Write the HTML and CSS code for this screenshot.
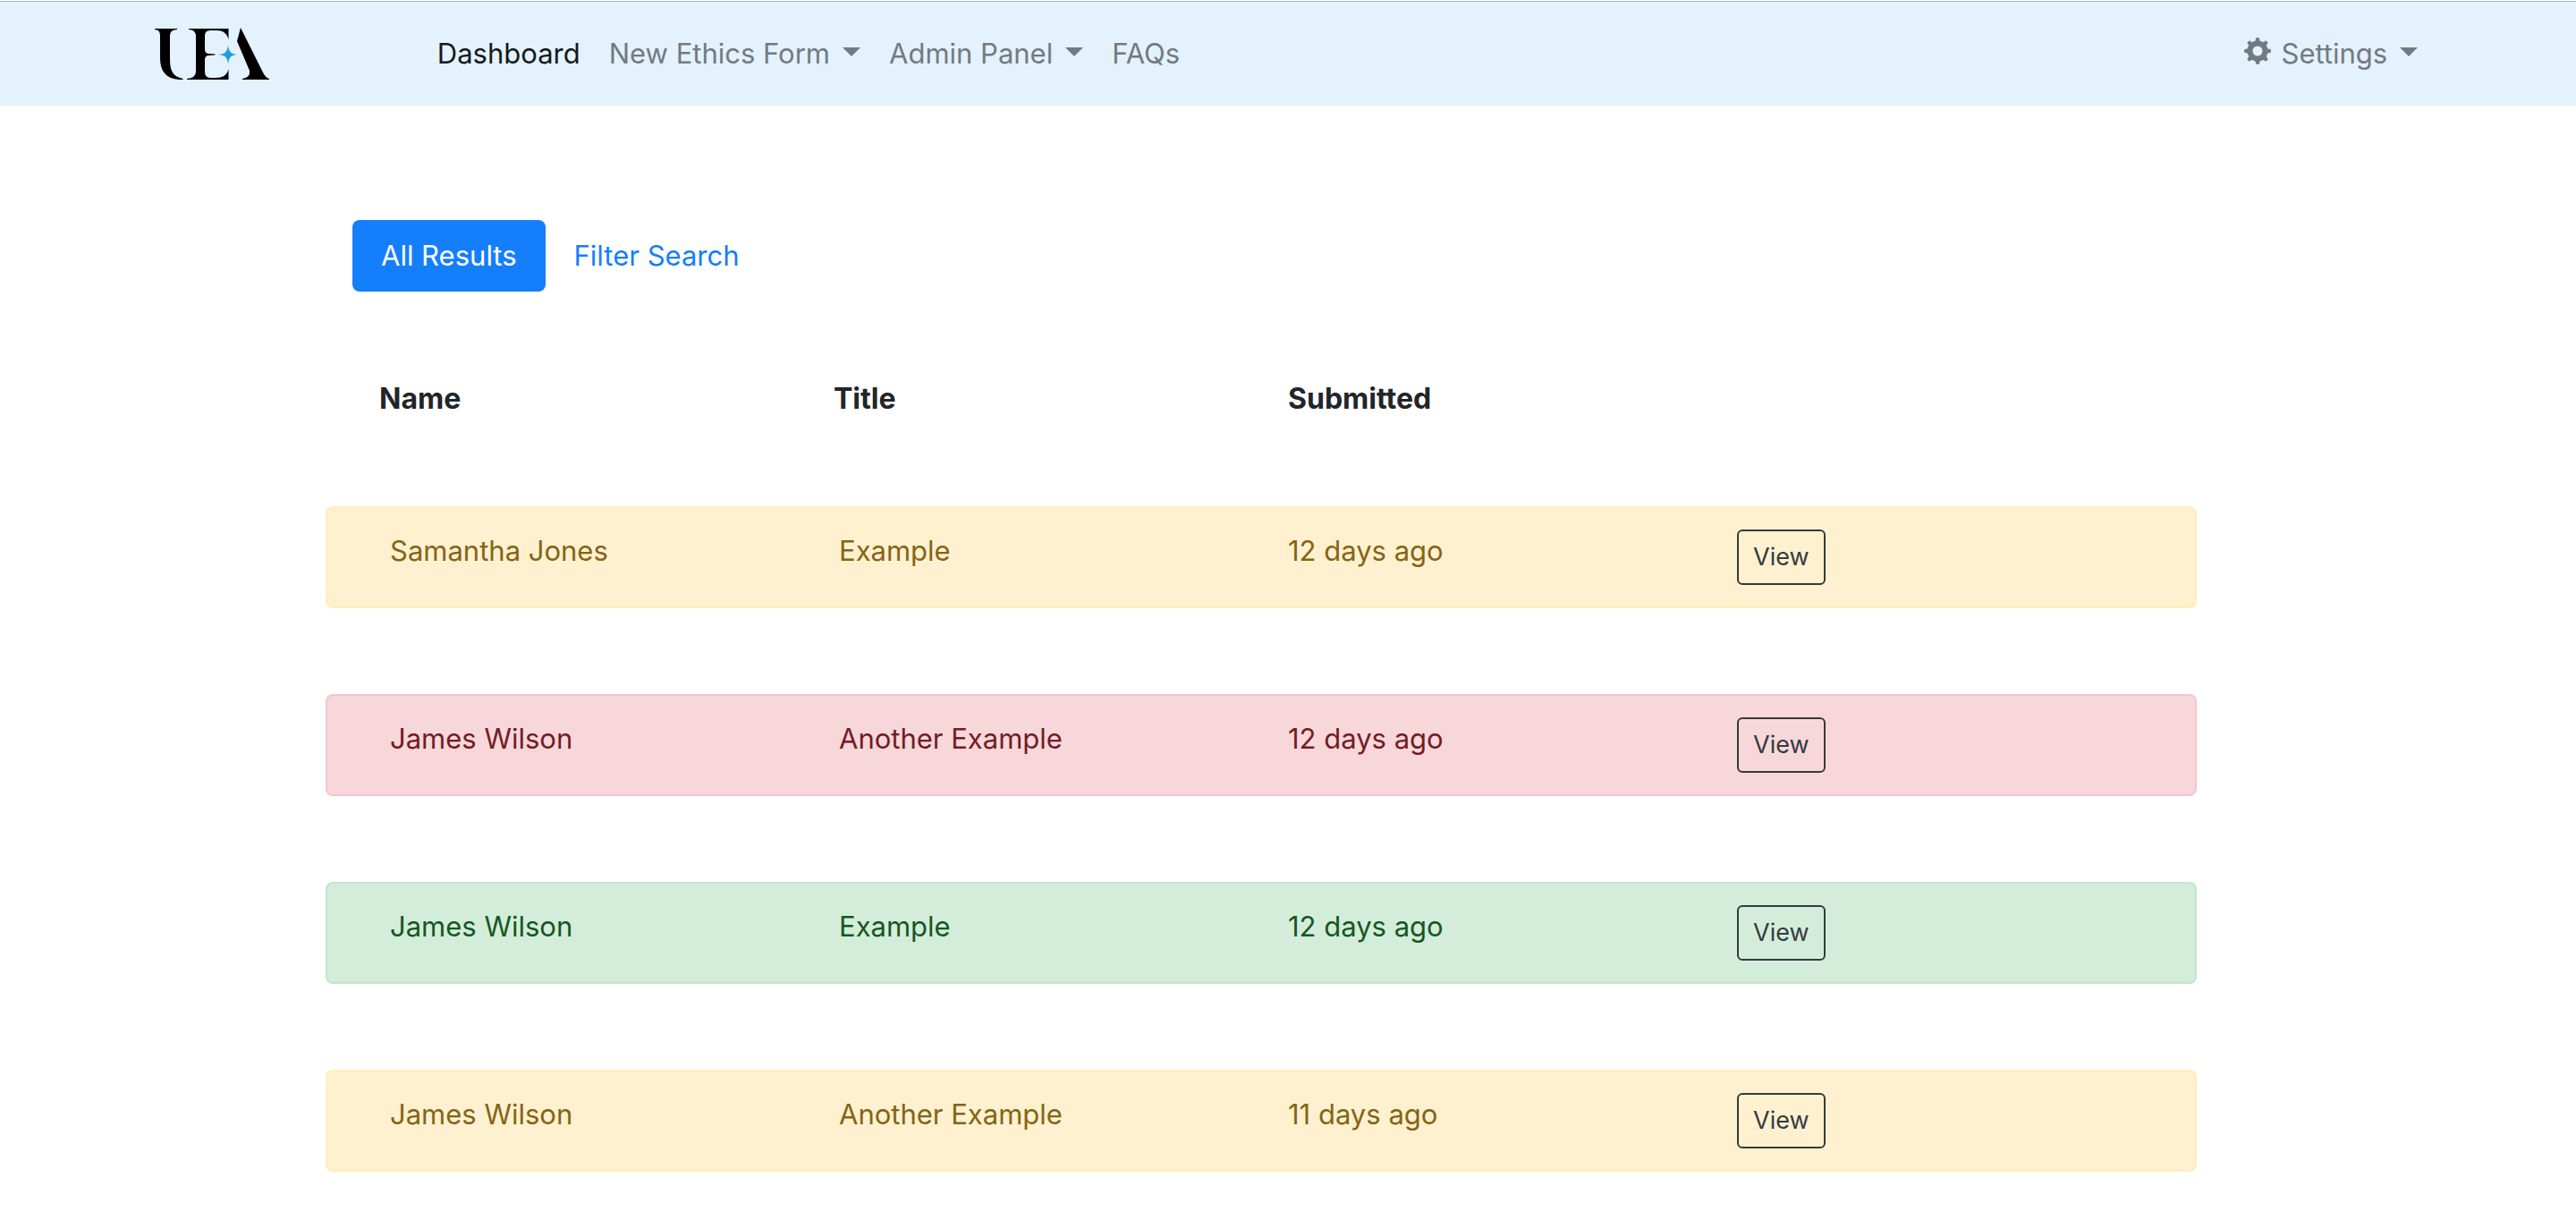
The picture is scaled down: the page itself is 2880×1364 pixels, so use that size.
FILE: index.html
```html
<!DOCTYPE html>
<html lang="en">
<head>
<meta charset="utf-8">
<meta name="viewport" content="width=device-width, initial-scale=1">
<title>Dashboard</title>
<link rel="stylesheet" href="styles.css">
</head>
<body>
<header class="navbar">
  <a class="brand" href="#" aria-label="UEA home">
    <svg class="logo" viewBox="0 0 128 58" aria-hidden="true">
      <g fill="#000">
        <path d="M0 1H25V2Q17 2 17 9V36C17 50 22 55 31.500 57V58H27C13 57 6 49 6 34V9Q6 2 0 2Z"/>
        <path d="M38 1H82.500V13.500C81 6 76 3 69 3H62Q56 3 56 9V24Q56 28.500 60 29L67.500 29.500V30.500L60 31Q56 31.500 56 36V49Q56 56 62 56H68C76 56 81 53 82.500 46V58H36V57Q46 56 46 49V10Q46 2 38 2Z"/>
        <path d="M96 0L121 50Q124 56 128 57V58H98V57Q107 56 106 48L92 15Z"/>
      </g>
      <path fill="#1b9fdf" d="M82 19Q82.500 25 85 27.500Q87 29.500 93 30Q87 30.500 85 32.500Q82.500 35 82 41Q81.500 35 79 32.500Q77 30.500 70 30Q77 29.500 79 27.500Q81.500 25 82 19Z"/>
    </svg>
  </a>
  <nav class="menu">
    <a class="menu-link current" href="#" aria-current="page">Dashboard</a>
    <button class="menu-link caret" type="button">New Ethics Form</button>
    <button class="menu-link caret" type="button">Admin Panel</button>
    <a class="menu-link" href="#">FAQs</a>
  </nav>
  <button class="menu-link caret settings" type="button">
    <svg class="gear" viewBox="0 0 30 30" aria-hidden="true">
      <path fill="none" stroke="currentColor" stroke-width="6" d="M15 6.500a8.500 8.500 0 1 0 0 17a8.500 8.500 0 1 0 0-17Z"/>
      <g fill="currentColor">
        <path id="tooth" d="M12 6L13 1Q13 0 15 0Q17 0 17 1L18 6Z"/>
        <use href="#tooth" transform="rotate(45 15 15)"/>
        <use href="#tooth" transform="rotate(90 15 15)"/>
        <use href="#tooth" transform="rotate(135 15 15)"/>
        <use href="#tooth" transform="rotate(180 15 15)"/>
        <use href="#tooth" transform="rotate(225 15 15)"/>
        <use href="#tooth" transform="rotate(270 15 15)"/>
        <use href="#tooth" transform="rotate(315 15 15)"/>
      </g>
    </svg>Settings</button>
</header>
<main class="content">
  <div class="pills">
    <button class="pill active" type="button">All Results</button>
    <button class="pill" type="button">Filter Search</button>
  </div>
  <table class="results">
    <thead>
      <tr class="head"><th scope="col">Name</th><th scope="col">Title</th><th scope="col">Submitted</th><td></td></tr>
    </thead>
    <tbody>
      <tr class="entry warning"><td>Samantha Jones</td><td>Example</td><td>12 days ago</td><td><button class="view" type="button">View</button></td></tr>
      <tr class="entry danger"><td>James Wilson</td><td>Another Example</td><td>12 days ago</td><td><button class="view" type="button">View</button></td></tr>
      <tr class="entry success"><td>James Wilson</td><td>Example</td><td>12 days ago</td><td><button class="view" type="button">View</button></td></tr>
      <tr class="entry warning"><td>James Wilson</td><td>Another Example</td><td>11 days ago</td><td><button class="view" type="button">View</button></td></tr>
    </tbody>
  </table>
</main>
</body>
</html>
```
FILE: styles.css
```css
* {
  box-sizing: border-box;
}

body {
  margin: 0;
  padding-top: 1px;
  background: #fff;
  color: #212529;
  font: 31px/48px Inter, "Liberation Sans", sans-serif;
}

button {
  font: inherit;
  border: 0;
  background: none;
  cursor: pointer;
}

a {
  text-decoration: none;
}

.navbar {
  display: flex;
  align-items: center;
  padding: 18px 6%;
  border-top: 1px solid #adb4b9;
  background: #e3f2fd;
}

.brand {
  display: flex;
  width: 300px;
}

.logo {
  width: 128px;
  height: 58px;
}

.menu {
  display: flex;
}

.menu-link {
  display: flex;
  align-items: center;
  padding: 16px;
  color: #737a80;
}

.current {
  color: #17191b;
}

.caret::after {
  content: "";
  margin: 0 0 4px 14px;
  border: solid transparent;
  border-width: 10px 10px 0;
  border-top-color: currentColor;
}

.settings {
  margin-left: auto;
  padding-right: 4px;
}

.gear {
  width: 30px;
  height: 30px;
  margin: 0 12px 6px 0;
}

.content {
  max-width: 2280px;
  margin: 0 auto;
  padding: 128px 124px 0 64px;
}

.pills {
  display: flex;
  padding: 0 30px;
}

.pill {
  padding: 16px 32px;
  border-radius: 8px;
  color: #157efb;
}

.active {
  background: #157efb;
  color: #fff;
}

.results {
  display: block;
  margin-top: 96px;
}

.results thead,
.results tbody {
  display: block;
}

.results tr {
  display: grid;
  grid-template-columns: repeat(4, 1fr);
}

.results th,
.results td {
  padding: 0 30px;
  text-align: left;
}

.results th {
  font-size: 32px;
  font-weight: 700;
}

.head {
  padding: 0 30px;
}

.entry {
  margin: 96px 0;
  padding: 24px 40px;
  border: 2px solid;
  border-radius: 8px;
}

.warning {
  border-color: #ffeeba;
  background: #fff1cf;
  color: #856415;
}

.danger {
  border-color: #f5c6cb;
  background: #f8d7da;
  color: #721c24;
}

.success {
  border-color: #c3e6cb;
  background: #d4edda;
  color: #155724;
}

.view {
  display: block;
  padding: 8px 16px;
  border: 2px solid #343a40;
  border-radius: 6px;
  color: #343a40;
  font-size: 27px;
  line-height: 42px;
}
```
